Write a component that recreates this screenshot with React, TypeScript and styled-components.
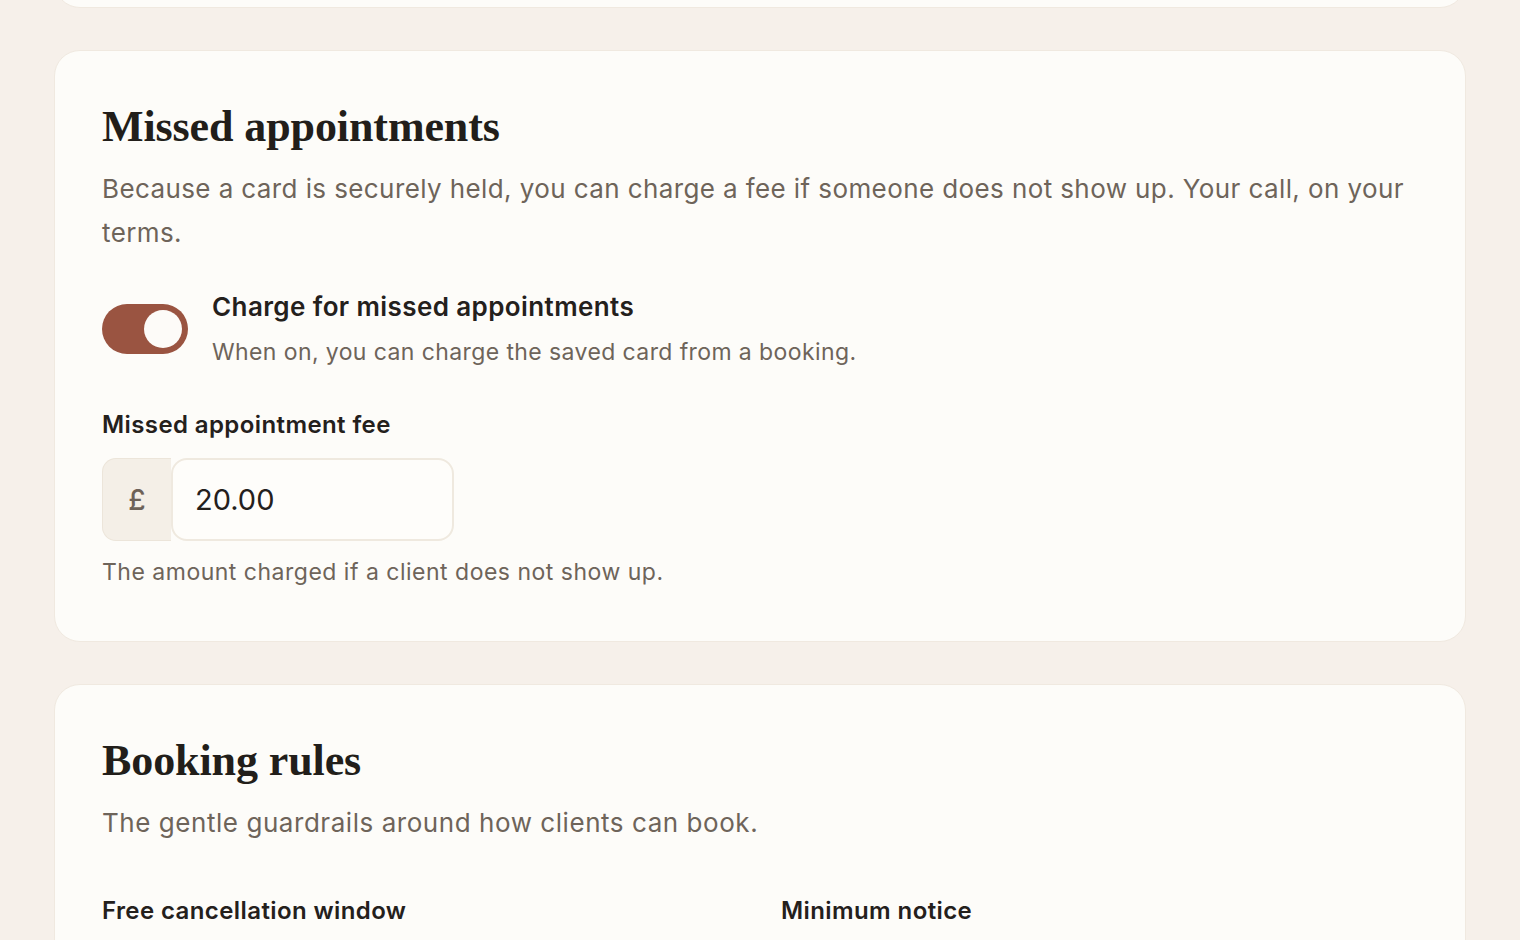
import styled, {createGlobalStyle} from 'styled-components';

const GlobalStyle = createGlobalStyle`
  html, body {
    margin: 0;
    padding: 0;
    overflow: hidden;
    background: #f6f0ea;
  }
  body {
    font-family: Inter, "Noto Sans", sans-serif;
    color: #24201c;
  }
`;

export default function App() {
  return (
    <>
      <GlobalStyle />
      <Page>
        <PrevCard />
        <Card>
          <Title>Missed appointments</Title>
          <Lead>
            Because a card is securely held, you can charge a fee if someone does not show up. Your
            call, on your terms.
          </Lead>
          <ToggleRow>
            <Toggle role="switch" aria-checked="true" $on>
              <Knob />
            </Toggle>
            <ToggleText>
              <ToggleLabel>Charge for missed appointments</ToggleLabel>
              <ToggleHint>When on, you can charge the saved card from a booking.</ToggleHint>
            </ToggleText>
          </ToggleRow>
          <Field>
            <FieldLabel>Missed appointment fee</FieldLabel>
            <InputGroup>
              <Prefix>£</Prefix>
              <AmountInput defaultValue="20.00" />
            </InputGroup>
            <Help>The amount charged if a client does not show up.</Help>
          </Field>
        </Card>
        <Card>
          <Title>Booking rules</Title>
          <Lead $wide>The gentle guardrails around how clients can book.</Lead>
          <RulesGrid>
            <FieldLabel>Free cancellation window</FieldLabel>
            <FieldLabel>Minimum notice</FieldLabel>
          </RulesGrid>
        </Card>
      </Page>
    </>
  );
}

const Page = styled.div`
  display: flex;
  flex-direction: column;
  gap: 42px;
  padding: 0 54px;
`;

const Card = styled.section`
  background: #fdfcf9;
  border: 1px solid #f0e9e0;
  border-radius: 26px;
  padding: 48px 47px 52px;
`;

const PrevCard = styled(Card)`
  height: 108px;
  margin-top: -100px;
  padding: 0;
  box-sizing: border-box;
`;

const Title = styled.h2`
  margin: 0;
  font-family: "Liberation Serif", "DejaVu Serif", serif;
  font-weight: 700;
  font-size: 44px;
  line-height: 56px;
  letter-spacing: -0.1px;
  color: #221e1a;
`;

const Lead = styled.p<{$wide?: boolean}>`
  margin: 12px 0 0;
  font-size: 26px;
  line-height: 44px;
  letter-spacing: ${p => (p.$wide ? '0.55px' : '0.4px')};
  color: #6e645a;
`;

const ToggleRow = styled.div`
  display: flex;
  align-items: flex-start;
  gap: 24px;
  margin-top: 36px;
`;

const Toggle = styled.button<{$on?: boolean}>`
  flex: none;
  width: 86px;
  height: 50px;
  margin-top: 13px;
  border: none;
  border-radius: 25px;
  padding: 6px;
  background: ${p => (p.$on ? '#9a5441' : '#ddd3c7')};
  display: flex;
  justify-content: ${p => (p.$on ? 'flex-end' : 'flex-start')};
  align-items: center;
  cursor: pointer;
`;

const Knob = styled.span`
  width: 38px;
  height: 38px;
  border-radius: 50%;
  background: #fdfbf8;
`;

const ToggleText = styled.div`
  display: flex;
  flex-direction: column;
`;

const ToggleLabel = styled.div`
  font-size: 26px;
  line-height: 32px;
  font-weight: 600;
  letter-spacing: 0.4px;
  color: #24201c;
`;

const ToggleHint = styled.div`
  margin-top: 11px;
  font-size: 23px;
  line-height: 36px;
  letter-spacing: 0.4px;
  color: #6e645a;
`;

const Field = styled.div`
  display: flex;
  flex-direction: column;
  align-items: flex-start;
  margin-top: 39px;
`;

const FieldLabel = styled.div`
  font-size: 24px;
  line-height: 32px;
  font-weight: 600;
  letter-spacing: 0.4px;
  color: #24201c;
`;

const InputGroup = styled.div`
  display: flex;
  margin-top: 17px;
  height: 83px;
`;

const Prefix = styled.span`
  width: 68px;
  display: flex;
  align-items: center;
  justify-content: center;
  background: #f4efe7;
  border: 1px solid #ece5da;
  border-right: none;
  border-radius: 14px 0 0 14px;
  font-size: 28px;
  font-weight: 500;
  color: #6d6258;
`;

const AmountInput = styled.input`
  width: 283px;
  box-sizing: border-box;
  border: 2px solid #efe9df;
  border-radius: 16px;
  background: #fefdfa;
  padding: 0 22px;
  font-family: inherit;
  font-size: 29px;
  color: #24201c;
  outline: none;
`;

const Help = styled.div`
  margin-top: 14px;
  font-size: 23px;
  line-height: 34px;
  letter-spacing: 0.5px;
  color: #6e645a;
`;

const RulesGrid = styled.div`
  display: grid;
  grid-template-columns: 1fr 1fr;
  column-gap: 42px;
  margin-top: 50px;
`;
